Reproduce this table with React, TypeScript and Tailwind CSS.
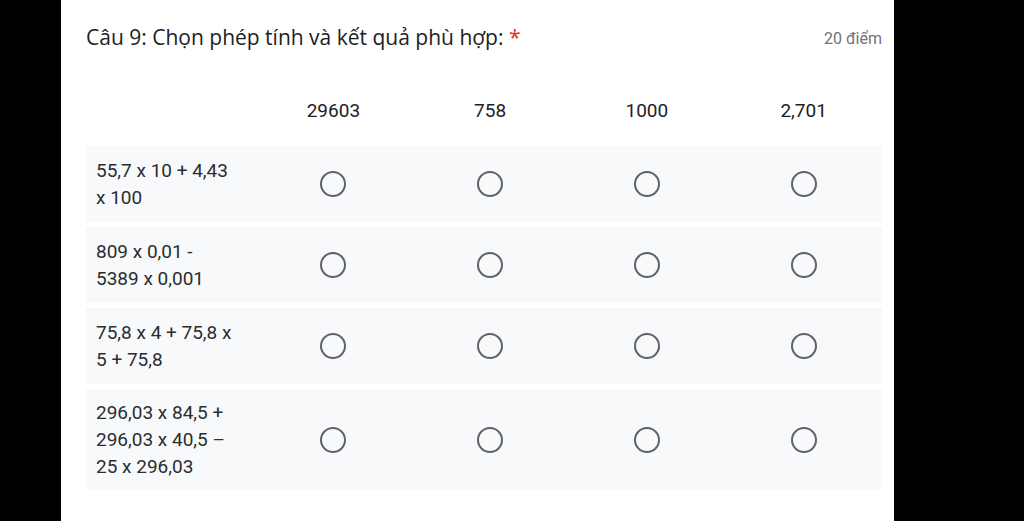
const columns = ["29603", "758", "1000", "2,701"];

const rows = [
  "55,7 x 10 + 4,43 x 100",
  "809 x 0,01 - 5389 x 0,001",
  "75,8 x 4 + 75,8 x 5 + 75,8",
  "296,03 x 84,5 + 296,03 x 40,5 – 25 x 296,03",
];

const Radio = () => (
  <span className="block w-[26px] h-[26px] rounded-full border-2 border-[#5f6368]"></span>
);

export default function App() {
  return (
    <div className="w-[1024px] h-[521px] bg-black overflow-hidden">
      <div className="ml-[61px] w-[833px] h-full bg-white pl-[25px] pr-[12px] font-['Roboto',sans-serif] text-[#202124]">
        {/* header */}
        <div className="flex items-center justify-between pt-[22px] h-[52px]">
          <h2 className="font-['Open_Sans',sans-serif] text-[21px] leading-[30px]">
            Câu 9: Chọn phép tính và kết quả phù hợp: <span className="text-[#d93025]">*</span>
          </h2>
          <span className="text-[16px] text-[#70757a] mt-[4px]">20 điểm</span>
        </div>

        {/* grid header */}
        <div className="grid grid-cols-[169px_repeat(4,1fr)] h-[40px] mt-[39px] items-center text-[19px]">
          <div></div>
          {columns.map((c) => (
            <div key={c} className="text-center">
              {c}
            </div>
          ))}
        </div>

        {/* rows */}
        <div className="flex flex-col gap-[5px] mt-[15px]">
          {rows.map((r, i) => (
            <div
              key={i}
              className="grid grid-cols-[169px_repeat(4,1fr)] min-h-[76px] items-center bg-[#f8f9fa] py-[10px]"
            >
              <div className="pl-[10px] pr-[16px] text-[19px] leading-[27px] text-[#2b2d30]">{r}</div>
              {columns.map((c) => (
                <div key={c} className="flex justify-center">
                  <Radio />
                </div>
              ))}
            </div>
          ))}
        </div>
      </div>
    </div>
  );
}
